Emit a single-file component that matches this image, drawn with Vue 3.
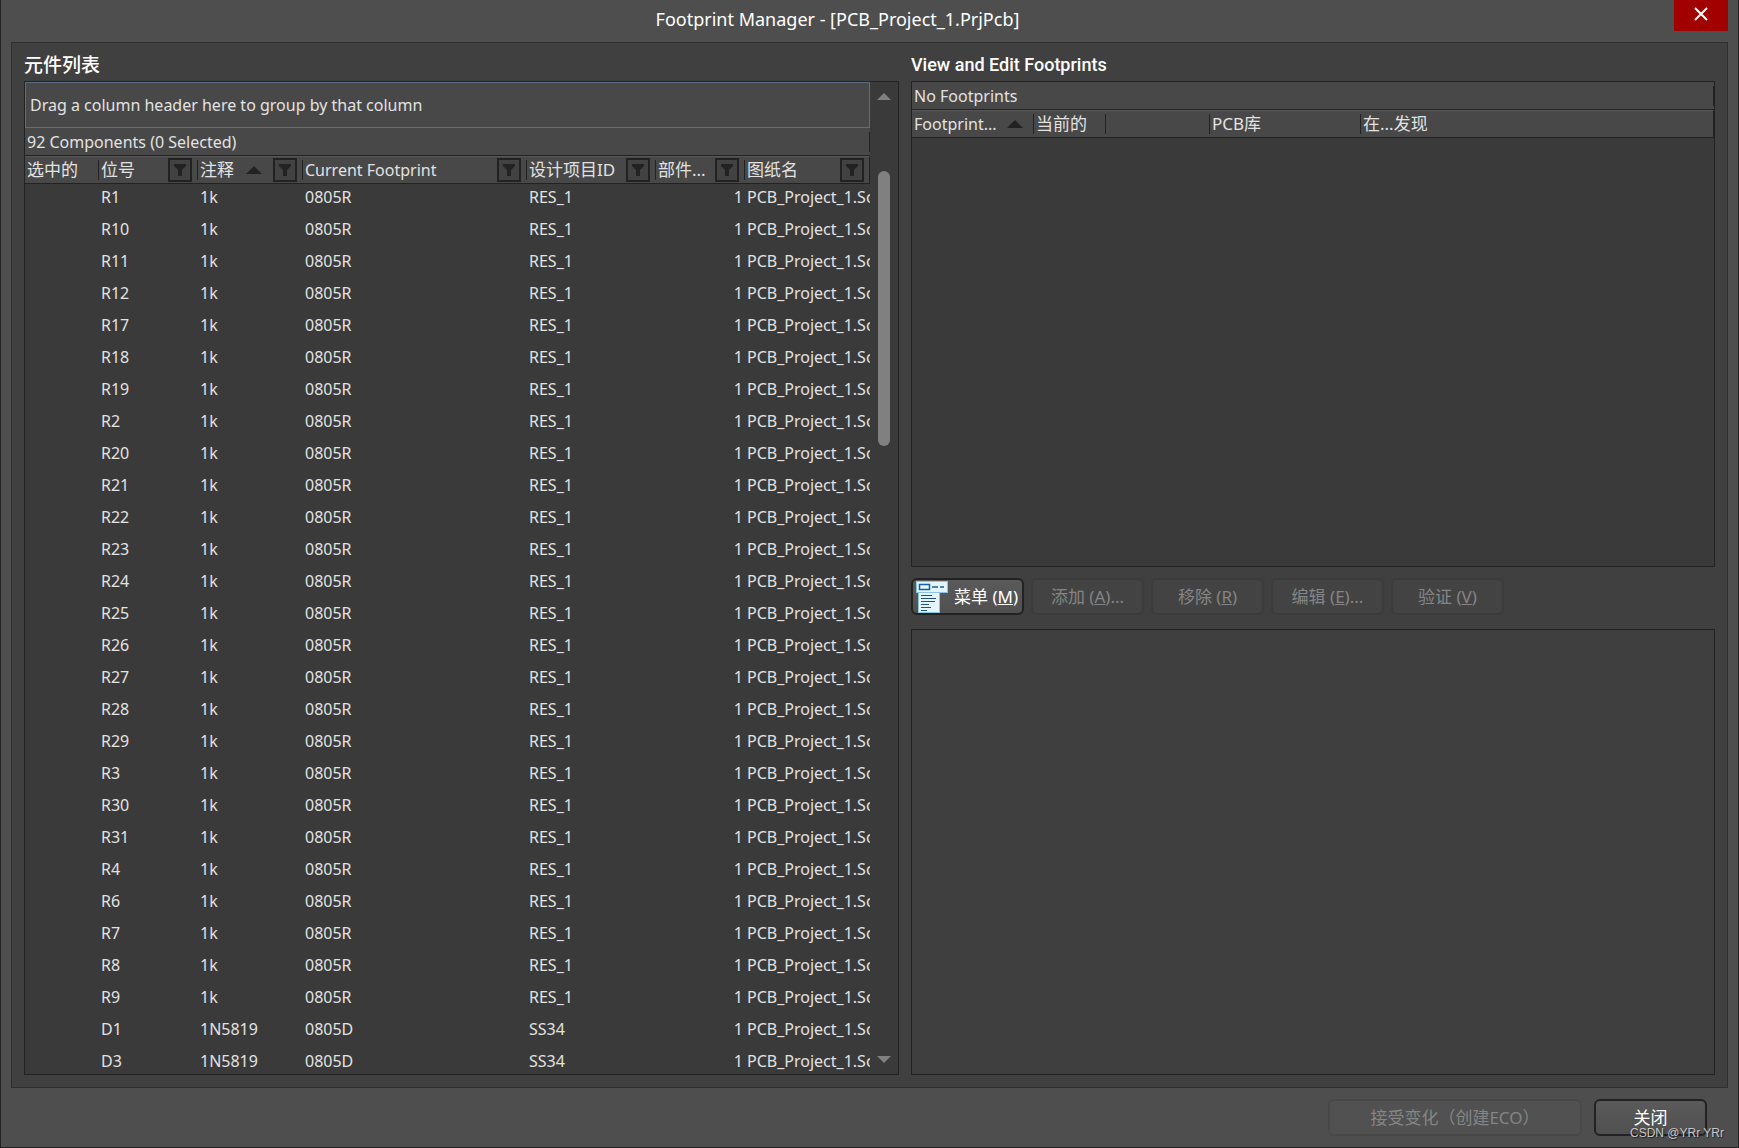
<script setup>
const columns = [
  { key: 'selected', label: '选中的', width: 73, filter: false },
  { key: 'designator', label: '位号', width: 99, filter: true },
  { key: 'comment', label: '注释', width: 105, filter: true, sorted: true },
  { key: 'footprint', label: 'Current Footprint', width: 224, filter: true, latin: true },
  { key: 'item', label: '设计项目ID', width: 129, filter: true },
  { key: 'parts', label: '部件...', width: 89, filter: true },
  { key: 'sheet', label: '图纸名', width: null, filter: true },
]

const resistors = [
  'R1', 'R10', 'R11', 'R12', 'R17', 'R18', 'R19', 'R2', 'R20', 'R21', 'R22', 'R23', 'R24',
  'R25', 'R26', 'R27', 'R28', 'R29', 'R3', 'R30', 'R31', 'R4', 'R6', 'R7', 'R8', 'R9',
]
const sheet = 'PCB_Project_1.SchDoc'

const components = [
  ...resistors.map((designator) => ({
    designator, comment: '1k', footprint: '0805R', item: 'RES_1', parts: 1, sheet,
  })),
  ...['D1', 'D3'].map((designator) => ({
    designator, comment: '1N5819', footprint: '0805D', item: 'SS34', parts: 1, sheet,
  })),
]

const footprintColumns = [
  { label: 'Footprint...', width: 121, sorted: true, latin: true },
  { label: '当前的', width: 72 },
  { label: '', width: 104 },
  { label: 'PCB库', width: 151 },
  { label: '在...发现', width: null },
]

const actions = [
  { label: '添加', key: 'A', tail: '...' },
  { label: '移除', key: 'R', tail: '' },
  { label: '编辑', key: 'E', tail: '...' },
  { label: '验证', key: 'V', tail: '' },
]
</script>

<template>
  <div class="window">
    <header class="titlebar">
      <h1>Footprint Manager - [PCB_Project_1.PrjPcb]</h1>
      <button class="close-x" type="button" aria-label="Close">
        <svg width="14" height="14" viewBox="0 0 14 14"><path d="M1 1L13 13M13 1L1 13" /></svg>
      </button>
    </header>

    <main class="panel">
      <section class="column">
        <h2 class="cjk-title">元件列表</h2>
        <div class="pane list">
          <div class="list-main">
            <div class="group-box">Drag a column header here to group by that column</div>
            <div class="band count">92 Components (0 Selected)</div>
            <div class="rows">
              <table>
                <colgroup>
                  <col v-for="c in columns" :key="c.key" :style="c.width ? { width: c.width + 'px' } : null" />
                </colgroup>
                <thead>
                  <tr>
                    <th v-for="c in columns" :key="c.key" scope="col">
                      <div class="head" :class="{ latin: c.latin }">
                        <span class="label">{{ c.label }}</span>
                        <svg v-if="c.sorted" class="sort" width="16" height="8" viewBox="0 0 16 8"><path d="M8 0L16 8H0Z" /></svg>
                        <button v-if="c.filter" class="filter" type="button" :aria-label="'Filter ' + c.label">
                          <svg width="12" height="12" viewBox="0 0 12 12"><path d="M0 0H12V2L8 6V12H4V6L0 2Z" /></svg>
                        </button>
                      </div>
                    </th>
                  </tr>
                </thead>
                <tbody>
                  <tr v-for="row in components" :key="row.designator">
                    <td v-for="c in columns" :key="c.key" :class="c.key">{{ row[c.key] }}</td>
                  </tr>
                </tbody>
              </table>
            </div>
          </div>
          <div class="scrollbar">
            <svg width="14" height="7" viewBox="0 0 14 7"><path d="M7 0L14 7H0Z" /></svg>
            <div class="track"><div class="thumb"></div></div>
            <svg width="14" height="7" viewBox="0 0 14 7"><path d="M0 0H14L7 7Z" /></svg>
          </div>
        </div>
      </section>

      <section class="column">
        <h2>View and Edit Footprints</h2>
        <div class="pane footprints">
          <div class="band count">No Footprints</div>
          <table>
            <colgroup>
              <col v-for="(c, i) in footprintColumns" :key="i" :style="c.width ? { width: c.width + 'px' } : null" />
            </colgroup>
            <thead>
              <tr>
                <th v-for="(c, i) in footprintColumns" :key="i" scope="col">
                  <div class="head" :class="{ latin: c.latin }">
                    <span class="label">{{ c.label }}</span>
                    <svg v-if="c.sorted" class="sort" width="16" height="8" viewBox="0 0 16 8"><path d="M8 0L16 8H0Z" /></svg>
                  </div>
                </th>
              </tr>
            </thead>
          </table>
        </div>
        <div class="actions">
          <button class="btn menu" type="button">
            <svg width="32" height="32" viewBox="0 0 32 32">
              <rect x="2.5" y="11.5" width="21" height="20" fill="#e4f5fd" stroke="#8cc4e4" />
              <rect x=".5" y=".5" width="31" height="11" fill="#e4f5fd" stroke="#8cc4e4" />
              <path d="M3.5 3.5H13.5V8.5H3.5ZM16 6H22M24 6H28" fill="none" stroke="#1560a0" stroke-width="1.5" />
              <path d="M5 14.5H16M5 17.500H20M5 20.500H19M5 23.500H13M5 26.500H15M5 29.500H11" fill="none" stroke="#1d4f8c" />
            </svg>
            <span>菜单 (<u>M</u>)</span>
          </button>
          <button v-for="a in actions" :key="a.key" class="btn" type="button" disabled>
            <span>{{ a.label }} (<u>{{ a.key }}</u>){{ a.tail }}</span>
          </button>
        </div>
        <div class="pane preview"></div>
      </section>
    </main>

    <footer class="footer">
      <button class="btn accept" type="button" disabled>接受变化（创建ECO）</button>
      <button class="btn" type="button">关闭</button>
      <span class="watermark">CSDN @YRr YRr</span>
    </footer>
  </div>
</template>

<style>
body {
  margin: 0;
  background: #4e4e4e;
}
</style>

<style scoped>
.window {
  box-sizing: border-box;
  min-height: 100vh;
  display: flex;
  flex-direction: column;
  border: 1px solid #222;
  border-top: 0;
  background: #4e4e4e;
  color: #e2e2e2;
  font: 16px/26px "Noto Sans", "Noto Sans CJK SC", sans-serif;
}
.window * {
  box-sizing: border-box;
}
button {
  font: inherit;
  color: inherit;
  padding: 0;
}
h1,
h2 {
  margin: 0;
  color: #fff;
  font-weight: 400;
}
.titlebar {
  display: flex;
  align-items: flex-start;
  height: 42px;
  padding-right: 10px;
}
h1 {
  flex: 1;
  font-size: 18px;
  line-height: 38px;
  text-align: center;
}
.close-x {
  display: grid;
  place-items: center;
  width: 54px;
  height: 31px;
  padding-bottom: 4px;
  border: 0;
  background: #a00000;
}
.close-x path {
  fill: none;
  stroke: #fff;
  stroke-width: 2;
}
.panel {
  flex: 1;
  display: grid;
  grid-template-columns: 875fr 804fr;
  gap: 12px;
  margin: 0 10px;
  padding: 0 12px 12px;
  border: 1px solid #2f2f2f;
  background: #404040;
}
.column {
  display: flex;
  flex-direction: column;
  min-width: 0;
}
h2 {
  height: 38px;
  font: 500 18px/44px Roboto, "Liberation Sans", sans-serif;
}
h2.cjk-title {
  font: 500 19px/42px "Noto Sans CJK SC", sans-serif;
}
.pane {
  border: 1px solid #222;
  background: #3a3a3a;
}
.list {
  flex: 1;
  display: flex;
}
.list-main {
  flex: 1;
  min-width: 0;
  display: flex;
  flex-direction: column;
}
.group-box {
  height: 46px;
  padding-left: 4px;
  border: 1px solid #5c6e84;
  background: #484848;
  line-height: 44px;
}
.band {
  height: 28px;
  padding: 1px 0 0 2px;
  border-bottom: 1px solid #222;
  background: linear-gradient(#222, #222) right center / 1px 20px no-repeat, #484848;
}
.rows {
  flex: 1 1 0;
  min-height: 0;
  overflow: hidden;
}
table {
  width: 100%;
  table-layout: fixed;
  border-collapse: separate;
  border-spacing: 0;
}
th {
  height: 28px;
  padding: 0 0 0 2px;
  border-top: 1px solid #565656;
  border-bottom: 1px solid #222;
  background: linear-gradient(#222, #222) left center / 1px 20px no-repeat, #484848;
  font-weight: 400;
  text-align: left;
}
th:first-child {
  background: #484848;
}
th:last-child {
  border-right: 1px solid #222;
}
th + th {
  padding-left: 3px;
}
.head {
  display: flex;
  align-items: center;
  height: 26px;
  padding-right: 5px;
  font-size: 17px;
  white-space: nowrap;
}
.head.latin {
  font-size: 16px;
}
.label {
  flex: 1;
  min-width: 0;
}
.sort {
  margin-right: 11px;
  fill: #222;
}
.footprints .sort {
  margin-right: 5px;
}
.filter {
  display: grid;
  place-items: center;
  width: 24px;
  height: 24px;
  border: 2px solid #222;
  background: #424242;
}
.filter path {
  fill: #222;
}
td {
  height: 32px;
  padding: 0 0 6px 3px;
  overflow: hidden;
  white-space: nowrap;
}
td.parts {
  padding-right: 1px;
  text-align: right;
}
.scrollbar {
  display: flex;
  flex-direction: column;
  align-items: center;
  width: 28px;
  padding: 11px 0;
  fill: #808080;
}
.track {
  flex: 1;
  width: 12px;
  padding-top: 71px;
}
.thumb {
  height: 275px;
  border-radius: 6px;
  background: #808080;
}
.footprints {
  height: 486px;
}
.actions {
  display: flex;
  gap: 7px;
  padding: 11px 0 14px;
}
.preview {
  flex: 1;
  background: #3f3f3f;
}
.btn {
  display: flex;
  align-items: center;
  justify-content: center;
  width: 113px;
  height: 37px;
  border: 2px solid #222;
  border-radius: 6px;
  background: linear-gradient(#5a5a5a, #505050);
  color: #fff;
  font-size: 17px;
  white-space: nowrap;
}
.btn:disabled {
  border-color: rgba(0, 0, 0, 0.1);
  background: rgba(255, 255, 255, 0.02);
  color: #858585;
}
.menu {
  justify-content: flex-start;
  gap: 6px;
  padding-left: 3px;
}
.footer {
  position: relative;
  display: flex;
  gap: 12px;
  justify-content: flex-end;
  padding: 11px 31px 11px 0;
}
.accept {
  width: 254px;
}
.watermark {
  position: absolute;
  right: 14px;
  bottom: 6px;
  color: #c8c8c8;
  font: 12px/16px "Liberation Sans", sans-serif;
  text-shadow: 1px 1px 1px #222;
}
</style>
